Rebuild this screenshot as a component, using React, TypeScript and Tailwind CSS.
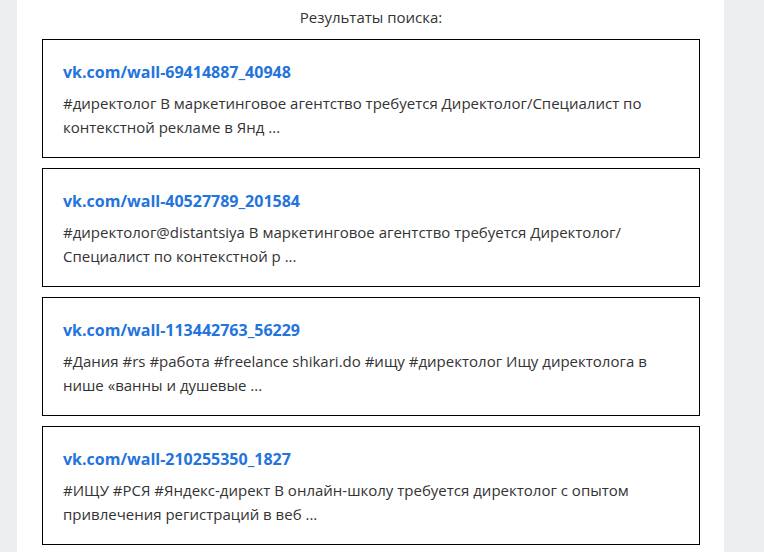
const results = [
  {
    link: "vk.com/wall-69414887_40948",
    text: "#директолог В маркетинговое агентство требуется Директолог/Специалист по контекстной рекламе в Янд ...",
  },
  {
    link: "vk.com/wall-40527789_201584",
    text: "#директолог@distantsiya В маркетинговое агентство требуется Директолог/Специалист по контекстной р ...",
  },
  {
    link: "vk.com/wall-113442763_56229",
    text: "#Дания #rs #работа #freelance shikari.do #ищу #директолог Ищу директолога в нише «ванны и душевые ...",
  },
  {
    link: "vk.com/wall-210255350_1827",
    text: "#ИЩУ #РСЯ #Яндекс-директ В онлайн-школу требуется директолог с опытом привлечения регистраций в веб ...",
  },
];

function ResultCard({ link, text }: { link: string; text: string }) {
  return (
    <div className="h-[119px] border border-black px-5 pt-[20px]">
      <a
        href="#"
        className="block text-[16px] font-bold leading-6 text-[#2374dd] no-underline"
      >
        {link}
      </a>
      <p className="mt-[7px] text-[15px] leading-6 text-[#333]">{text}</p>
    </div>
  );
}

export default function App() {
  return (
    <div className="min-h-[552px] bg-[#edeef0] font-['Open_Sans',sans-serif]">
      <div className="ml-[17px] min-h-[552px] w-[707px] bg-white px-[25px] pr-[24px] pt-[6px]">
        <div className="text-center text-[15px] leading-[22px] text-[#333]">
          Результаты поиска:
        </div>
        <div className="mt-[11px] flex flex-col gap-[10px]">
          {results.map((r) => (
            <ResultCard key={r.link} link={r.link} text={r.text} />
          ))}
        </div>
      </div>
    </div>
  );
}
